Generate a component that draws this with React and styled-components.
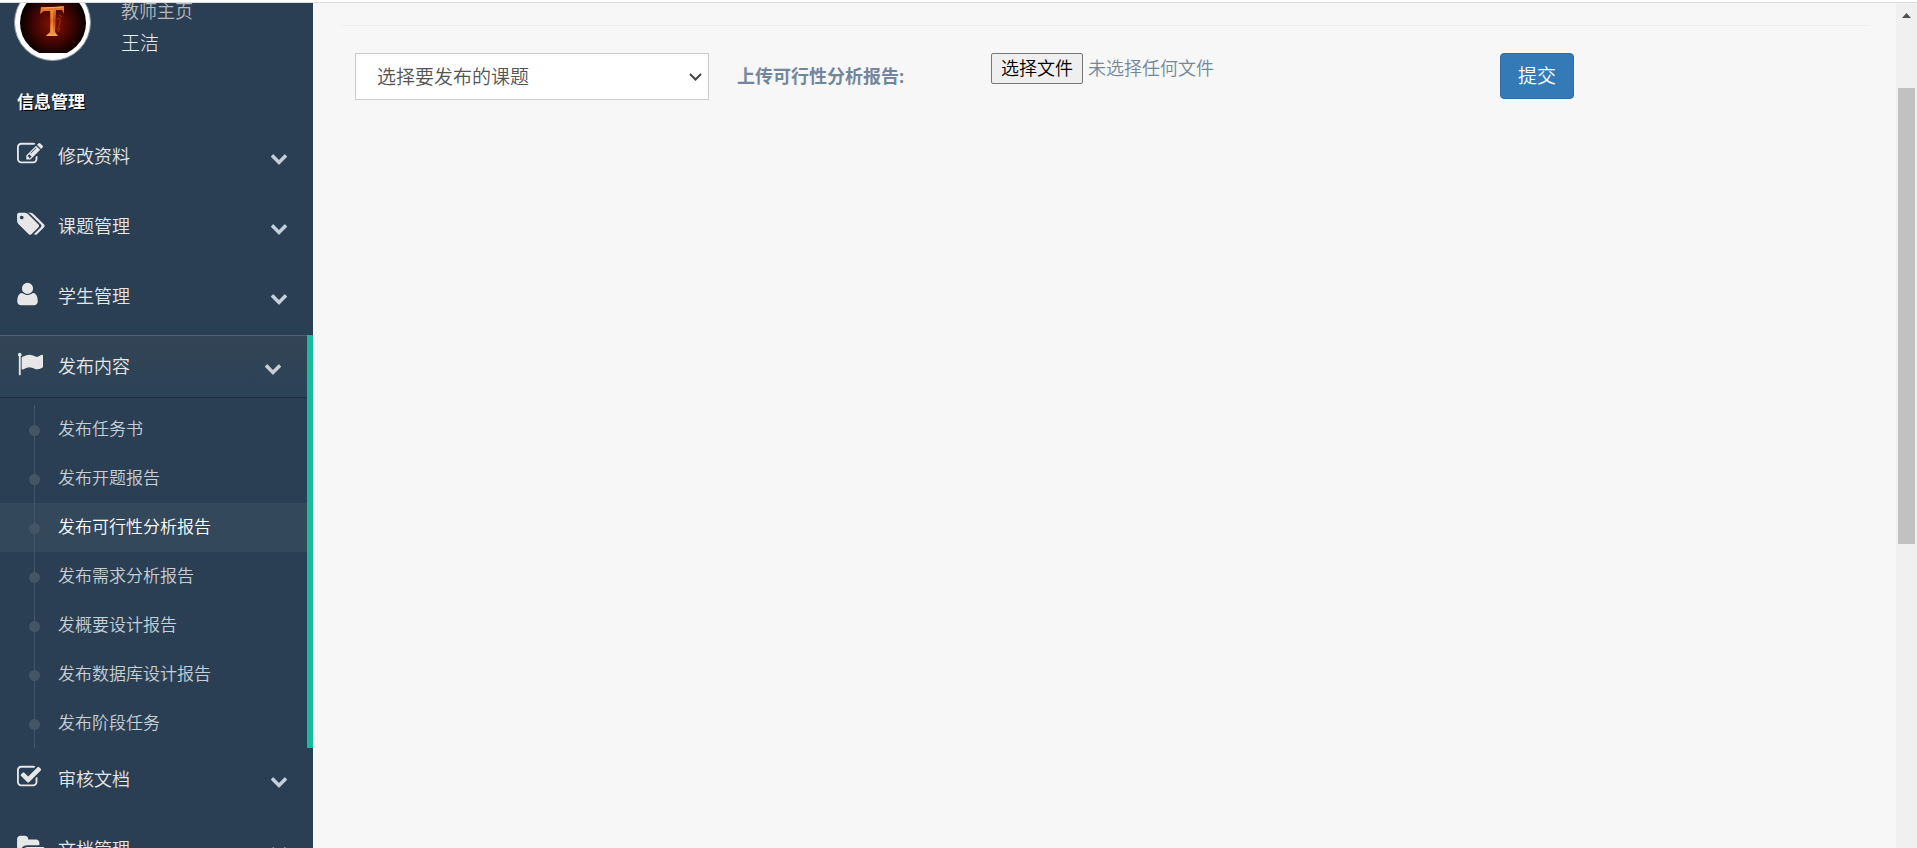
import { useRef, useState } from "react";
import styled, { createGlobalStyle } from "styled-components";

const ICONS = {
  edit: {
    box: "0 0 1792 1792",
    width: 26,
    d: "M888 1184l116-116-152-152-116 116v56h96v96h56zm440-720q-16-16-33 1l-350 350q-17 17-1 33t33-1l350-350q17-17 1-33zm80 594v190q0 119-84.5 203.5t-203.5 84.5h-832q-119 0-203.5-84.5t-84.5-203.5v-832q0-119 84.5-203.5t203.5-84.5h832q63 0 117 25 15 7 18 23 3 17-9 29l-49 49q-14 14-32 8-23-6-45-6h-832q-66 0-113 47t-47 113v832q0 66 47 113t113 47h832q66 0 113-47t47-113v-126q0-13 9-22l64-64q15-15 35-7t20 29zm-96-738l288 288-672 672h-288v-288zm444 132l-92 92-288-288 92-92q28-28 68-28t68 28l152 152q28 28 28 68t-28 68z",
  },
  tags: {
    box: "0 0 1920 1792",
    width: 28,
    d: "M448 448q0-53-37.5-90.5t-90.5-37.5-90.5 37.5-37.5 90.5 37.5 90.5 90.5 37.5 90.5-37.5 37.5-90.5zm1067 576q0 53-37 90l-491 492q-39 37-91 37-53 0-90-37l-715-716q-38-37-64.5-101t-26.5-117v-416q0-52 38-90t90-38h416q53 0 117 26.5t102 64.5l715 714q37 39 37 91zm384 0q0 53-37 90l-491 492q-39 37-91 37-36 0-59-14t-53-45l470-470q37-37 37-90 0-52-37-91l-715-714q-38-38-102-64.5t-117-26.5h224q53 0 117 26.5t102 64.5l715 714q37 39 37 91z",
  },
  user: {
    box: "192 0 1408 1792",
    width: 21,
    d: "M1600 1405q0 120-73 189.5t-194 69.5h-874q-121 0-194-69.5t-73-189.5q0-53 3.5-103.5t14-109 26.5-108.5 43-97.5 62-81 85.5-53.5 111.5-20q9 0 42 21.5t74.5 48 108 48 133.5 21.5 133.5-21.5 108-48 74.5-48 42-21.5q61 0 111.5 20t85.5 53.5 62 81 43 97.5 26.5 108.5 14 109 3.5 103.5zm-320-893q0 159-112.5 271.5t-271.5 112.5-271.5-112.5-112.5-271.5 112.5-271.5 271.5-112.5 271.5 112.5 112.5 271.5z",
  },
  flag: {
    box: "0 0 1792 1792",
    width: 26,
    d: "M320 256q0 72-64 110v1266q0 13-9.5 22.5t-22.5 9.5h-64q-13 0-22.5-9.5t-9.5-22.5v-1266q-64-38-64-110 0-53 37.5-90.5t90.5-37.5 90.5 37.5 37.5 90.5zm1472 64v763q0 25-12.5 38.5t-39.5 27.5q-215 116-369 116-61 0-123.5-22t-108.5-48-115.5-48-142.5-22q-192 0-464 146-17 9-33 9-26 0-45-19t-19-45v-742q0-32 31-55 21-14 79-43 236-120 421-120 107 0 200 29t219 88q38 19 88 19 54 0 117.5-21t110-47 88-47 54.5-21q26 0 45 19t19 45z",
  },
  check: {
    box: "64 0 1792 1792",
    width: 26,
    d: "M1472 930v318q0 119-84.5 203.5t-203.5 84.5h-832q-119 0-203.5-84.5t-84.5-203.5v-832q0-119 84.5-203.5t203.5-84.5h832q63 0 117 25 15 7 18 23 3 17-9 29l-49 49q-10 10-23 10-3 0-9-2-23-6-45-6h-832q-66 0-113 47t-47 113v832q0 66 47 113t113 47h832q66 0 113-47t47-113v-254q0-13 9-22l64-64q10-10 23-10 6 0 12 3 20 8 20 29zm231-489l-814 814q-24 24-57 24t-57-24l-430-430q-24-24-24-57t24-57l110-110q24-24 57-24t57 24l263 263 647-647q24-24 57-24t57 24l110 110q24 24 24 57t-24 57z",
  },
  folder: {
    box: "0 0 1920 1792",
    width: 28,
    d: "M1879 952q0 31-31 66l-336 396q-43 51-120.5 86.5t-143.5 35.5h-1088q-34 0-60.5-13t-26.5-43q0-31 31-66l336-396q43-51 120.5-86.5t143.5-35.5h1088q34 0 60.5 13t26.5 43zm-343-344v160h-832q-94 0-197 47.5t-164 119.5l-337 396-5 6q0-4-.5-12.5t-.5-12.5v-960q0-92 66-158t158-66h320q92 0 158 66t66 158v32h544q92 0 158 66t66 158z",
  },
};

const MENU = [
  { label: "修改资料", icon: "edit" },
  { label: "课题管理", icon: "tags" },
  { label: "学生管理", icon: "user" },
  {
    label: "发布内容",
    icon: "flag",
    children: [
      "发布任务书",
      "发布开题报告",
      "发布可行性分析报告",
      "发布需求分析报告",
      "发概要设计报告",
      "发布数据库设计报告",
      "发布阶段任务",
    ],
  },
  { label: "审核文档", icon: "check" },
  { label: "文档管理", icon: "folder" },
];

const GlobalStyle = createGlobalStyle`
  *, *::before, *::after {
    box-sizing: border-box;
  }
  body {
    margin: 0;
    background: #f7f7f7;
    color: #73879c;
    font-family: "Open Sans", "Noto Sans CJK SC", sans-serif;
    font-size: 18px;
    font-weight: 350;
    line-height: 26px;
  }
  button, select {
    font-family: inherit;
    font-weight: inherit;
  }
`;
const Page = styled.div`
  height: 100vh;
  display: flex;
  flex-direction: column;
  overflow: hidden;
`;
const TopEdge = styled.div`
  flex: none;
  height: 3px;
  background: #fff;
  border-bottom: 1px solid #dcdcdc;
`;
const Shell = styled.div`
  flex: 1;
  min-height: 0;
  display: flex;
`;
const Sidebar = styled.aside`
  flex: none;
  width: 313px;
  background: #2a3f54;
  overflow: hidden;
`;
const Profile = styled.div`
  display: flex;
  align-items: flex-end;
  gap: 30px;
  height: 78px;
  margin-top: -20px;
  padding-left: 14px;
`;
const Avatar = styled.svg`
  flex: none;
  width: 77px;
  height: 77px;
`;
const ProfileInfo = styled.div`
  display: flex;
  flex-direction: column;
  gap: 4px;
  padding-bottom: 4px;
`;
const Role = styled.span`
  color: #bab8b8;
  line-height: 28px;
`;
const UserName = styled.h2`
  margin: 0;
  color: #ecf0f1;
  font-size: 19px;
  font-weight: 300;
  line-height: 28px;
`;
const SectionTitle = styled.h3`
  margin: 28px 0 10px;
  padding-left: 17px;
  color: #fff;
  font-size: 17px;
  font-weight: 700;
  line-height: 26px;
  text-shadow: 1px 1px #000;
`;
const List = styled.ul`
  list-style: none;
  margin: 0;
  padding: 0;
`;
const MenuItem = styled.li`
  border-right: ${(p) => (p.$active ? "6px solid #1abb9c" : "none")};
  padding-bottom: ${(p) => (p.$active ? "0" : "8px")};
`;
const MenuLink = styled.a`
  display: flex;
  align-items: center;
  height: 62px;
  padding: 0 25px 0 17px;
  color: #e7e7e7;
  text-decoration: none;
  ${(p) =>
    p.$active &&
    `
    background: linear-gradient(#334556, #2c4257), #2a3f54;
    box-shadow: rgba(0, 0, 0, 0.25) 0 1px 0, inset rgba(255, 255, 255, 0.16) 0 1px 0;
  `}
`;
const IconSlot = styled.span`
  flex: none;
  width: 41px;
  height: 30px;
  display: flex;
  align-items: flex-start;
`;
const Glyph = styled.svg`
  display: block;
  fill: currentColor;
`;
const Chevron = styled.svg`
  width: 18px;
  height: 18px;
  margin: 4px 0 0 auto;
  fill: #c4cfda;
`;
const SubMenu = styled(List)`
  margin-top: 8px;
`;
const SubItem = styled.li`
  position: relative;
  background: ${(p) => (p.$current ? "rgba(255, 255, 255, 0.05)" : "none")};
  &::before {
    content: "";
    position: absolute;
    left: 29px;
    top: 20px;
    width: 11px;
    height: 11px;
    border-radius: 50%;
    background: #425668;
  }
  &::after {
    content: "";
    position: absolute;
    left: 34px;
    top: 0;
    bottom: 0;
    border-left: 1px solid #425668;
  }
`;
const SubLink = styled.a`
  display: block;
  padding: 0 0 2px 58px;
  color: ${(p) => (p.$current ? "#fff" : "rgba(255, 255, 255, 0.75)")};
  font-size: 17px;
  line-height: 47px;
  text-decoration: none;
`;
const Content = styled.main`
  flex: 1;
  min-width: 0;
  padding: 22px 27px 0 28px;
`;
const Rule = styled.hr`
  margin: 0 0 27px;
  border: 0;
  border-top: 1px solid #eee;
`;
const Form = styled.form`
  display: grid;
  grid-template-columns: 382fr 254fr 509fr 383fr;
  align-items: start;
`;
const SelectBox = styled.div`
  position: relative;
  margin: 0 14px;
`;
const Select = styled.select`
  appearance: none;
  display: block;
  width: 100%;
  height: 47px;
  padding: 0 40px 0 21px;
  border: 1px solid #ccc;
  border-radius: 0;
  background: #fff;
  color: #555;
  font-size: 19px;
  line-height: 28px;
`;
const SelectArrow = styled.svg`
  position: absolute;
  right: 7px;
  top: 18px;
  width: 13px;
  height: 12px;
  fill: none;
  stroke: #444;
  stroke-width: 2;
  pointer-events: none;
`;
const FieldLabel = styled.label`
  padding: 10px 0 0 14px;
  font-weight: 700;
`;
const FilePicker = styled.div`
  display: flex;
  align-items: flex-start;
  gap: 5px;
  padding-left: 14px;
`;
const HiddenFile = styled.input`
  display: none;
`;
const FileBtn = styled.button`
  height: 31px;
  padding: 0 9px;
  border: 1px solid #767676;
  border-radius: 2px;
  background: #efefef;
  color: #000;
  font-size: 18px;
  line-height: 29px;
`;
const FileName = styled.span`
  line-height: 31px;
`;
const SubmitBtn = styled.button`
  justify-self: start;
  height: 46px;
  margin-left: 14px;
  padding: 0 17px;
  border: 1px solid #2e6da4;
  border-radius: 4px;
  background: #337ab7;
  color: #fff;
  font-size: 19px;
  line-height: 28px;
  cursor: pointer;
`;
const ScrollTrack = styled.div`
  flex: none;
  width: 21px;
  padding: 10px 2px 0;
  background: #f0f0f0;
`;
const ScrollUp = styled.svg`
  display: block;
  width: 17px;
  height: 5px;
  margin-bottom: 70px;
  fill: #505050;
`;
const ScrollThumb = styled.div`
  height: calc(54vh - 2px);
  background: #c1c1c1;
`;

function Icon({ name }) {
  const icon = ICONS[name];
  return (
    <Glyph viewBox={icon.box} width={icon.width} height="26" aria-hidden>
      <path d={icon.d} />
    </Glyph>
  );
}

function ProfileAvatar() {
  return (
    <Avatar viewBox="0 0 77 77" role="img" aria-label="王洁">
      <defs>
        <radialGradient id="glow" cx="50%" cy="52%" r="50%">
          <stop offset="0" stopColor="#8a1204" />
          <stop offset="0.5" stopColor="#4a0602" />
          <stop offset="1" stopColor="#060000" />
        </radialGradient>
        <linearGradient id="flame" x1="0" y1="0" x2="0" y2="1">
          <stop offset="0" stopColor="#e88435" />
          <stop offset="0.5" stopColor="#c8480f" />
          <stop offset="1" stopColor="#f2a348" />
        </linearGradient>
        <clipPath id="photo">
          <rect x="6" y="6" width="66" height="63" />
        </clipPath>
      </defs>
      <circle cx="38.5" cy="38.5" r="38" fill="#fff" stroke="#8d99a5" />
      <g clipPath="url(#photo)">
        <circle cx="39" cy="39" r="33" fill="url(#glow)" />
        <path
          d="M27 23q11 1 23-1v8l-2-4h-6l-1 22 3 4H32l4-4V27l-6 0-4 3z"
          fill="url(#flame)"
        />
        <path
          d="M38 26v23M29 24l19-1M33 51h9"
          stroke="#f5b050"
          strokeWidth="1"
          fill="none"
        />
        <path
          d="M43 35q4-3 3 3t-3 8M45 31l3 2M46 44l-2 4"
          stroke="#a8300a"
          strokeWidth="1"
          fill="none"
        />
      </g>
    </Avatar>
  );
}

function SideMenu({ current, setCurrent }) {
  return (
    <List>
      {MENU.map((item) => {
        const active = Boolean(item.children);
        return (
          <MenuItem key={item.label} $active={active}>
            <MenuLink href="#" $active={active}>
              <IconSlot>
                <Icon name={item.icon} />
              </IconSlot>
              {item.label}
              <Chevron viewBox="0 0 1792 1792" aria-hidden>
                <path d="M1683 808l-742 741q-19 19-45 19t-45-19l-742-741q-19-19-19-45.5t19-45.5l166-165q19-19 45-19t45 19l531 531 531-531q19-19 45-19t45 19l166 165q19 19 19 45.5t-19 45.5z" />
              </Chevron>
            </MenuLink>
            {active && (
              <SubMenu>
                {item.children.map((child) => (
                  <SubItem key={child} $current={child === current}>
                    <SubLink
                      href="#"
                      $current={child === current}
                      onClick={() => setCurrent(child)}
                    >
                      {child}
                    </SubLink>
                  </SubItem>
                ))}
              </SubMenu>
            )}
          </MenuItem>
        );
      })}
    </List>
  );
}

function PublishForm() {
  const fileRef = useRef(null);
  const [fileName, setFileName] = useState("");

  return (
    <Form onSubmit={(e) => e.preventDefault()}>
      <SelectBox>
        <Select name="topic" aria-label="选择要发布的课题">
          <option>选择要发布的课题</option>
        </Select>
        <SelectArrow viewBox="0 0 13 12" aria-hidden>
          <path d="M1 3l5.5 5.5L12 3" />
        </SelectArrow>
      </SelectBox>
      <FieldLabel htmlFor="report">上传可行性分析报告:</FieldLabel>
      <FilePicker>
        <HiddenFile
          id="report"
          type="file"
          ref={fileRef}
          onChange={(e) => setFileName(e.target.files[0]?.name || "")}
        />
        <FileBtn type="button" onClick={() => fileRef.current.click()}>
          选择文件
        </FileBtn>
        <FileName>{fileName || "未选择任何文件"}</FileName>
      </FilePicker>
      <SubmitBtn type="submit">提交</SubmitBtn>
    </Form>
  );
}

function App() {
  const [current, setCurrent] = useState("发布可行性分析报告");

  return (
    <Page>
      <GlobalStyle />
      <TopEdge />
      <Shell>
        <Sidebar>
          <Profile>
            <ProfileAvatar />
            <ProfileInfo>
              <Role>教师主页</Role>
              <UserName>王洁</UserName>
            </ProfileInfo>
          </Profile>
          <SectionTitle>信息管理</SectionTitle>
          <SideMenu current={current} setCurrent={setCurrent} />
        </Sidebar>
        <Content>
          <Rule />
          <PublishForm />
        </Content>
        <ScrollTrack aria-hidden>
          <ScrollUp viewBox="0 0 17 5">
            <path d="M4 5l4.5-5L13 5z" />
          </ScrollUp>
          <ScrollThumb />
        </ScrollTrack>
      </Shell>
    </Page>
  );
}

export default App;
